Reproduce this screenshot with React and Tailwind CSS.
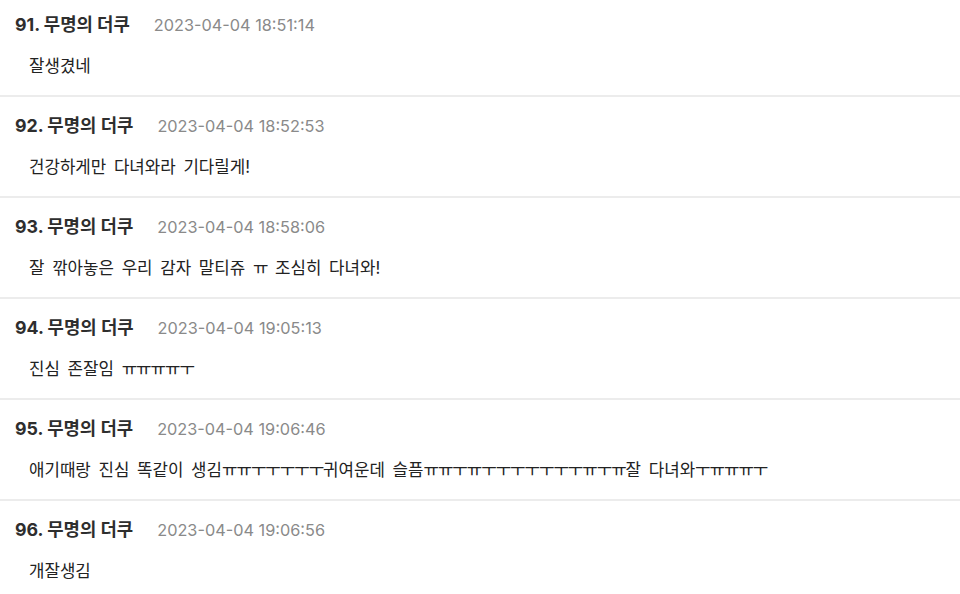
import React from 'react';

const comments = [
  { no: 91, name: '무명의 더쿠', date: '2023-04-04 18:51:14', body: '잘생겼네' },
  { no: 92, name: '무명의 더쿠', date: '2023-04-04 18:52:53', body: '건강하게만 다녀와라 기다릴게!' },
  { no: 93, name: '무명의 더쿠', date: '2023-04-04 18:58:06', body: '잘 깎아놓은 우리 감자 말티쥬 ㅠ 조심히 다녀와!' },
  { no: 94, name: '무명의 더쿠', date: '2023-04-04 19:05:13', body: '진심 존잘임 ㅠㅠㅠㅠㅜ' },
  {
    no: 95,
    name: '무명의 더쿠',
    date: '2023-04-04 19:06:46',
    body: '애기때랑 진심 똑같이 생김ㅠㅠㅜㅜㅜㅜㅜ귀여운데 슬픔ㅠㅠㅜㅠㅜㅜㅜㅜㅜㅜㅜㅠㅜㅠ잘 다녀와ㅜㅠㅠㅠㅜ',
  },
  { no: 96, name: '무명의 더쿠', date: '2023-04-04 19:06:56', body: '개잘생김' },
];

// jamo runs (ㅠㅜ) sit a little tighter than the syllables
const Body = ({ text }) => (
  <span>
    {text.split(/([ㅠㅜ]+)/).map((part, i) =>
      /^[ㅠㅜ]+$/.test(part) ? (
        <span key={i} className="tracking-[-1px]">
          {part}
        </span>
      ) : (
        part
      )
    )}
  </span>
);

const App = () => {
  return (
    <div
      className="h-[594px] overflow-hidden bg-white"
      style={{ fontFamily: 'Inter, "Noto Sans CJK KR", sans-serif' }}
    >
      {comments.map((c, i) => (
        <div
          key={c.no}
          className={`border-b-2 border-[#ececec] pb-[16px] ${i === 0 ? 'pt-[13px]' : 'pt-[17px]'}`}
        >
          <div className="flex items-center h-[24px] pl-[15px]">
            <span className="text-[17.8px] font-bold text-[#2e2e2e]">
              {c.no}. {c.name}
            </span>
            <span className="ml-[24px] text-[16.3px] text-[#8a8a8a]">{c.date}</span>
          </div>
          <div className="mt-[18px] h-[24px] flex items-center pl-[29px] text-[16.8px] text-[#222222] whitespace-nowrap [word-spacing:3px]">
            <Body text={c.body} />
          </div>
        </div>
      ))}
    </div>
  );
};

export default App;
